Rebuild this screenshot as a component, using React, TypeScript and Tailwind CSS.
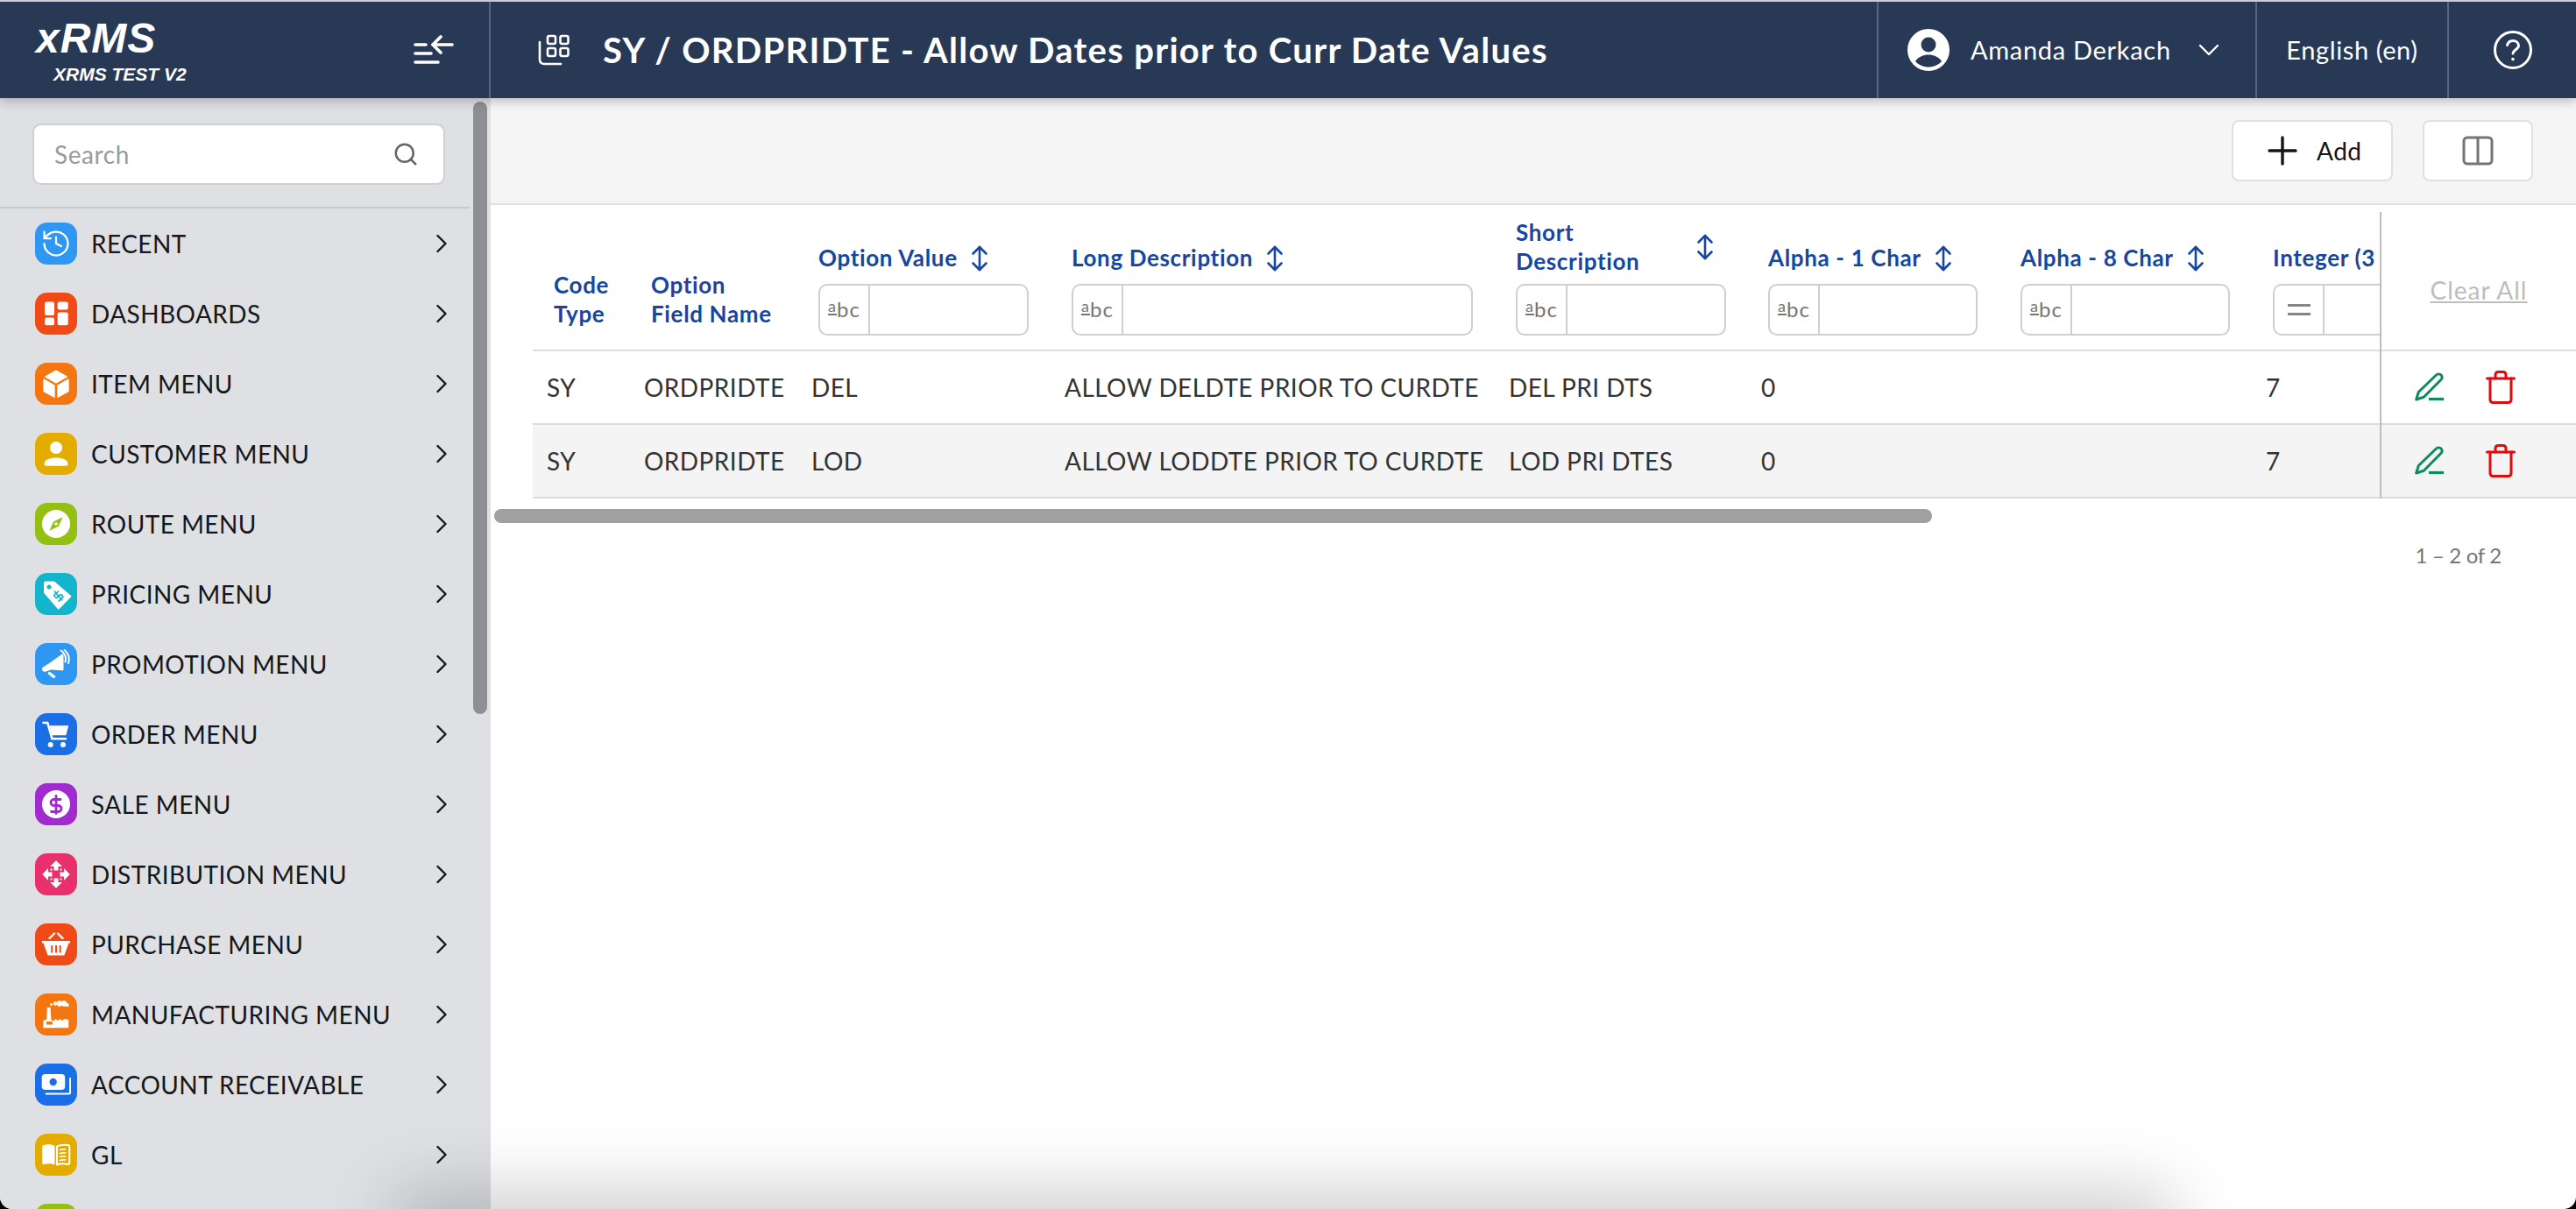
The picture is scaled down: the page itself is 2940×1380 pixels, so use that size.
import React from 'react';
import { ChevronRight, History, Search } from 'lucide-react';

const COLS = 'grid grid-cols-[111px_191px_289px_507px_288px_288px_288px_288px]';

const DollarMark = ({ stroke, transform }: { stroke: string; transform: string }) => (
  <g transform={transform} fill="none" stroke={stroke} strokeWidth="2.8" strokeLinecap="round" strokeLinejoin="round">
    <path d="M12 2v20" />
    <path d="M17 6H9.5a3.5 3.5 0 0 0 0 7h5a3.5 3.5 0 0 1 0 7H6.5" />
  </g>
);

const Tile = ({ bg, children }: { bg: string; children?: React.ReactNode }) => (
  <div className={`flex h-12 w-12 shrink-0 items-center justify-center rounded-[14px] ${bg}`}>{children}</div>
);

const Glyph = ({ children }: { children: React.ReactNode }) => (
  <svg width="48" height="48" viewBox="0 0 48 48">{children}</svg>
);

const MENU: { label: string; icon: React.ReactNode }[] = [
  {
    label: 'RECENT',
    icon: (
      <Tile bg="bg-[#2e97f1]">
        <History size={36} color="#fff" strokeWidth={1.5} />
      </Tile>
    ),
  },
  {
    label: 'DASHBOARDS',
    icon: (
      <Tile bg="bg-[#f04a17]">
        <Glyph>
          <g fill="#fff">
            <rect x="11" y="10.5" width="11" height="15.5" rx="2" />
            <rect x="25.7" y="10.5" width="12" height="9" rx="2" />
            <rect x="11" y="28.5" width="11" height="8.7" rx="2" />
            <rect x="25.7" y="22.5" width="12" height="14.7" rx="2" />
          </g>
        </Glyph>
      </Tile>
    ),
  },
  {
    label: 'ITEM MENU',
    icon: (
      <Tile bg="bg-[#f37610]">
        <Glyph>
          <g fill="#fff" stroke="#fff" strokeWidth="1.4" strokeLinejoin="round">
            <path d="M24 9.2 36.4 16 24 22.8 11.6 16z" />
            <path d="M10 19.2 22 26v13.2l-12-6.6z" />
            <path d="M38 19.2 26 26v13.2l12-6.6z" />
          </g>
        </Glyph>
      </Tile>
    ),
  },
  {
    label: 'CUSTOMER MENU',
    icon: (
      <Tile bg="bg-[#e5ac00]">
        <Glyph>
          <circle cx="24" cy="17" r="7" fill="#fff" />
          <path d="M10.5 35.5c0-4.5 6-7 13.5-7s13.500 2.500 13.500 7c0 1.400-.7 2.200-2 2.200H12.500c-1.300 0-2-.8-2-2.200z" fill="#fff" />
        </Glyph>
      </Tile>
    ),
  },
  {
    label: 'ROUTE MENU',
    icon: (
      <Tile bg="bg-[#94c011]">
        <Glyph>
          <circle cx="24" cy="24" r="16" fill="#fff" />
          <path d="M31.700 16.300 26.800 26.800 16.300 31.700 21.200 21.200z" fill="#94c011" />
          <circle cx="24" cy="24" r="1.700" fill="#fff" />
        </Glyph>
      </Tile>
    ),
  },
  {
    label: 'PRICING MENU',
    icon: (
      <Tile bg="bg-[#13b5cc]">
        <Glyph>
          <path d="M11.500 10h10L41 26.700 26.700 41 10.700 22.500V11z" fill="#fff" stroke="#fff" strokeWidth="1.200" strokeLinejoin="round" />
          <circle cx="16" cy="16" r="2.500" fill="#13b5cc" />
          <DollarMark stroke="#13b5cc" transform="translate(26.500 26) rotate(-40) scale(.62) translate(-12 -12)" />
        </Glyph>
      </Tile>
    ),
  },
  {
    label: 'PROMOTION MENU',
    icon: (
      <Tile bg="bg-[#2e97f1]">
        <Glyph>
          <path d="M31 12.500c1 0 1.500.6 1.500 1.500v16c0 1-.7 1.500-1.600 1.200L18 30.500l-6 2.200c-3.500 1-5.500-3.600-2.500-5.500l6-3.700z" fill="#fff" />
          <path d="M16.500 34.500l5 4" stroke="#fff" strokeWidth="3.500" strokeLinecap="round" />
          <g fill="none" stroke="#fff" strokeWidth="2" strokeLinecap="round">
            <path d="M29.500 8.500c4.500 2.500 6.500 8 5 13" />
            <path d="M33.500 8c4.500 3 6.500 9 4.500 15" />
          </g>
        </Glyph>
      </Tile>
    ),
  },
  {
    label: 'ORDER MENU',
    icon: (
      <Tile bg="bg-[#1a6fe6]">
        <Glyph>
          <path d="M16.500 14.300H38.300L35.300 25.300H19.500z" fill="#fff" />
          <path d="M9.500 11H14.300L19.500 29.300H35" fill="none" stroke="#fff" strokeWidth="2.600" strokeLinecap="round" strokeLinejoin="round" />
          <circle cx="17.700" cy="36" r="3" fill="#fff" />
          <circle cx="32" cy="36" r="3" fill="#fff" />
        </Glyph>
      </Tile>
    ),
  },
  {
    label: 'SALE MENU',
    icon: (
      <Tile bg="bg-[#a02ccf]">
        <Glyph>
          <circle cx="24" cy="24" r="16" fill="#fff" />
          <DollarMark stroke="#a02ccf" transform="translate(12 12.500)" />
        </Glyph>
      </Tile>
    ),
  },
  {
    label: 'DISTRIBUTION MENU',
    icon: (
      <Tile bg="bg-[#e8316c]">
        <Glyph>
          <g fill="#fff">
            <path d="M24 8.300 31 15h-4.500v4.500h-5V15H17z" />
            <path d="M24 39.700 31 33h-4.500v-4.500h-5V33H17z" />
            <path d="M8.300 24 15 17v4.500h4.500v5H15V31z" />
            <path d="M39.700 24 33 17v4.500h-4.500v5H33V31z" />
            <rect x="17.500" y="17.500" width="2" height="2" />
            <rect x="28.500" y="17.500" width="2" height="2" />
            <rect x="17.500" y="28.500" width="2" height="2" />
            <rect x="28.500" y="28.500" width="2" height="2" />
          </g>
        </Glyph>
      </Tile>
    ),
  },
  {
    label: 'PURCHASE MENU',
    icon: (
      <Tile bg="bg-[#f04a17]">
        <Glyph>
          <path d="M8 20h32v2.500h-1.600L34 35c-.3 1-1 1.500-2 1.500H16c-1 0-1.700-.5-2-1.500L9.600 22.500H8z" fill="#fff" />
          <g stroke="#f04a17" strokeWidth="2">
            <path d="M19.300 25v8.500" />
            <path d="M24 25v8.500" />
            <path d="M28.700 25v8.500" />
          </g>
          <g stroke="#fff" strokeWidth="2.400" strokeLinecap="round">
            <path d="M16.500 17l5.500-5.500" />
            <path d="M31.500 17 26 11.500" />
          </g>
        </Glyph>
      </Tile>
    ),
  },
  {
    label: 'MANUFACTURING MENU',
    icon: (
      <Tile bg="bg-[#f37610]">
        <Glyph>
          <path d="M13.800 16h3.800l.8 14 2.600 1.500 2.500-2.300 2.500 1.800 2.500-2 2.500 2 2.500-2 4.800 1V39.300H9.300V31l4-1.500z" fill="#fff" />
          <rect x="13" y="32" width="7" height="3.500" fill="#f37610" />
          <g fill="#fff">
            <circle cx="18.500" cy="12.500" r="1.500" />
            <circle cx="23" cy="11.500" r="2.200" />
            <circle cx="28" cy="11.500" r="3.200" />
            <circle cx="33" cy="11.500" r="3.200" />
            <circle cx="36.500" cy="13" r="2.200" />
          </g>
        </Glyph>
      </Tile>
    ),
  },
  {
    label: 'ACCOUNT RECEIVABLE',
    icon: (
      <Tile bg="bg-[#1a6fe6]">
        <Glyph>
          <rect x="7.700" y="12" width="26.500" height="18" rx="4" fill="#fff" />
          <circle cx="20.700" cy="21" r="4.200" fill="#1a6fe6" />
          <path d="M12.500 34.500H38.500c1 0 1.500-.5 1.500-1.500V17" fill="none" stroke="#fff" strokeWidth="2" strokeLinecap="round" />
        </Glyph>
      </Tile>
    ),
  },
  {
    label: 'GL',
    icon: (
      <Tile bg="bg-[#e5ac00]">
        <Glyph>
          <path d="M10 13c4-1 9-1 12.500 1v21.500C19 34 14 34 10 35c-1 .2-1.700-.4-1.700-1.400V14.500c0-.8.7-1.300 1.700-1.500z" fill="#fff" />
          <path d="M25 14.500c3.500-2 8-2 12.500-1.500 1 .1 1.800.7 1.800 1.500v19c0 1-.8 1.600-1.800 1.400-4-.8-9-.8-12.500.6z" fill="none" stroke="#fff" strokeWidth="2" strokeLinejoin="round" />
          <g stroke="#fff" strokeWidth="1.800" strokeLinecap="round">
            <path d="M28.500 18.500c2-.7 4-.8 6-.6" />
            <path d="M28.500 22.500c2-.7 4-.8 6-.6" />
            <path d="M28.500 26.500c2-.7 4-.8 6-.6" />
            <path d="M28.500 30.500c2-.7 4-.8 6-.6" />
          </g>
        </Glyph>
      </Tile>
    ),
  },
  { label: '', icon: <Tile bg="bg-[#94c011]" /> },
];

const SortIcon = () => (
  <svg width="20" height="30" viewBox="0 0 20 30" fill="none" stroke="#1746a0" strokeWidth="2.600" strokeLinecap="round" strokeLinejoin="round" className="shrink-0">
    <path d="M10 2v26" />
    <path d="M2.500 9.500 10 2l7.500 7.500" />
    <path d="M2.500 20.500 10 28l7.500-7.500" />
  </svg>
);

const FilterBox = ({ mode = 'text' }: { mode?: 'text' | 'equal' }) => (
  <div className="flex h-[59px] w-full shrink-0 rounded-[10px] border-2 border-[#cfcfcf] bg-white">
    <div className="flex w-[57px] shrink-0 items-center justify-center border-r-2 border-[#cfcfcf] text-[#757575]">
      {mode === 'text' ? (
        <span className="flex items-baseline text-[24px] leading-none tracking-[1px]">
          <span className="relative -top-[6px] border-b-2 border-[#757575] text-[18px] leading-[17px]">a</span>
          <span>bc</span>
        </span>
      ) : (
        <span className="flex w-[26px] flex-col gap-[7px]">
          <span className="h-[3px] bg-[#858585]" />
          <span className="h-[3px] bg-[#858585]" />
        </span>
      )}
    </div>
  </div>
);

const HeaderText = ({ children }: { children: React.ReactNode }) => (
  <span className="text-[26px] font-bold leading-[33px] tracking-[0.65px] text-[#1746a0]">{children}</span>
);

const FilterCell = ({ title, sort = true, mode }: { title: string; sort?: boolean; mode?: 'text' | 'equal' }) => (
  <div className="flex min-w-0 flex-col justify-end pb-4 pl-6 pr-[25px]">
    <div className="mb-[13px] flex items-center gap-[15px] whitespace-nowrap">
      <HeaderText>{title}</HeaderText>
      {sort && <SortIcon />}
    </div>
    <FilterBox mode={mode} />
  </div>
);

const ROWS = [
  { opt: 'DEL', long: 'ALLOW DELDTE PRIOR TO CURDTE', short: 'DEL PRI DTS', striped: false },
  { opt: 'LOD', long: 'ALLOW LODDTE PRIOR TO CURDTE', short: 'LOD PRI DTES', striped: true },
];

const RowActions = () => (
  <div className="flex items-center justify-center gap-[47px] pr-8">
    <svg width="34" height="34" viewBox="0 0 34 34" fill="none" stroke="#0e8a5f" strokeWidth="3" strokeLinecap="round" strokeLinejoin="round">
      <path d="M1.700 31l2.600-8.500L24.500 3c1.500-1.500 4-1.500 5.500 0s1.500 3.800 0 5.300L10.300 28.300z" />
      <path d="M16 30.500h17" strokeWidth="3.200" strokeLinecap="butt" />
    </svg>
    <svg width="34" height="38" viewBox="0 0 34 38" fill="none" stroke="#e00b0b" strokeWidth="3" strokeLinecap="round" strokeLinejoin="round">
      <path d="M1.500 9h31" />
      <path d="M5 9v24c0 2 1.400 3.500 3.500 3.500h17c2.100 0 3.500-1.500 3.500-3.500V9" />
      <path d="M11 9V5c0-2 1.400-3.500 3.500-3.500h5C21.600 1.500 23 3 23 5v4" />
    </svg>
  </div>
);

export default function App() {
  return (
    <div className="h-[1380px] overflow-hidden bg-black font-['Lato',sans-serif]">
      <div className="relative flex h-full flex-col overflow-hidden rounded-b-[14px] bg-white">
        {/* Header */}
        <header className="relative z-10 flex h-[112px] shrink-0 border-t-2 border-[#c9ccd1] bg-[#273955] text-white shadow-[0_3px_12px_rgba(0,0,0,0.25)]">
          <div className="flex w-[560px] shrink-0 items-center justify-between border-r-2 border-[#56667f] pl-[41px] pr-[40px]">
            <div className="flex flex-col pt-1 font-['Liberation_Sans',sans-serif] italic">
              <span className="text-[48px] font-bold leading-[38px] tracking-[1px]">xRMS</span>
              <span className="ml-5 mt-[13px] text-[21px] font-bold leading-[18px]">XRMS TEST V2</span>
            </div>
            <svg width="46" height="34" viewBox="0 0 46 34" fill="none" stroke="#fff" strokeWidth="3.600" strokeLinecap="round" strokeLinejoin="round">
              <path d="M2 11h12" />
              <path d="M2 21h18" />
              <path d="M2 31h26" />
              <path d="M44 11H22" />
              <path d="M31 2l-9 9 9 9" />
            </svg>
          </div>
          <div className="flex min-w-0 flex-1 items-center gap-[38px] pl-[54px]">
            <svg width="36" height="36" viewBox="0 0 36 36" fill="none" stroke="#fff" strokeWidth="2.600" strokeLinecap="round" strokeLinejoin="round" className="shrink-0">
              <rect x="11" y="2" width="9" height="9" rx="2" />
              <rect x="25.500" y="2" width="9" height="9" rx="2" />
              <rect x="11" y="16" width="9" height="9" rx="2" />
              <rect x="25.500" y="16" width="9" height="9" rx="2" />
              <path d="M2 9v20c0 3 2 5 5 5h19" />
            </svg>
            <h1 className="whitespace-nowrap text-[40px] font-bold leading-none tracking-[1.3px]">SY / ORDPRIDTE - Allow Dates prior to Curr Date Values</h1>
          </div>
          <div className="flex w-[432px] shrink-0 items-center border-l-2 border-[#56667f] pl-[33px]">
            <svg width="48" height="48" viewBox="0 0 48 48" className="shrink-0">
              <circle cx="24" cy="24" r="24" fill="#fff" />
              <circle cx="24" cy="18" r="8.500" fill="#273955" />
              <path d="M9 37c3-5 9-7.500 15-7.500S36 32 39 37c-3.500 4-9 6.500-15 6.500S12.500 41 9 37z" fill="#273955" />
            </svg>
            <span className="ml-[24px] whitespace-nowrap text-[29px] font-normal tracking-[0.7px]">Amanda Derkach</span>
            <svg width="24" height="14" viewBox="0 0 24 14" fill="none" stroke="#fff" strokeWidth="2.400" strokeLinecap="round" strokeLinejoin="round" className="ml-[31px]">
              <path d="M2 2l10 10L22 2" />
            </svg>
          </div>
          <div className="flex w-[219px] shrink-0 items-center justify-center whitespace-nowrap border-l-2 border-[#56667f] text-[29px] tracking-[0.6px]">English (en)</div>
          <div className="flex w-[147px] shrink-0 items-center justify-center border-l-2 border-[#56667f]">
            <svg width="46" height="46" viewBox="0 0 46 46" fill="none" stroke="#fff" strokeWidth="3" strokeLinecap="round" strokeLinejoin="round">
              <circle cx="23" cy="23" r="20.500" />
              <path d="M16.500 17.500c1-3.500 3.500-5 6.500-5 3.800 0 6.500 2.300 6.500 5.500 0 4.500-6.500 5-6.500 9" />
              <path d="M23 33.500v.1" strokeWidth="3.600" />
            </svg>
          </div>
        </header>

        <div className="flex min-h-0 flex-1">
          {/* Sidebar */}
          <aside className="relative flex w-[560px] shrink-0 flex-col overflow-hidden bg-[#dfe0e4]">
            <div className="w-[536px] shrink-0 border-b-2 border-[#c9cacd] pb-[25px] pl-[37px] pt-[29px]">
              <div className="flex h-[70px] w-[471px] items-center justify-between rounded-[10px] border-2 border-[#cfcfcf] bg-white pl-[23px] pr-7">
                <span className="text-[28px] tracking-[0.6px] text-[#9a9a9a]">Search</span>
                <Search size={30} color="#666" strokeWidth={2} />
              </div>
            </div>
            <nav className="flex flex-col">
              {MENU.map((item, i) => (
                <div key={i} className="flex h-20 shrink-0 items-center pl-10 pr-[38px]">
                  {item.icon}
                  <span className="ml-4 flex-1 whitespace-nowrap text-[28px] leading-none tracking-[0.45px] text-[#15171a]">{item.label}</span>
                  {item.label && <ChevronRight size={36} color="#15171a" strokeWidth={1.6} />}
                </div>
              ))}
            </nav>
            <div className="absolute right-1 top-1 h-[699px] w-4 rounded-full bg-[#8e8f94]" />
          </aside>

          {/* Main */}
          <main className="flex min-w-0 flex-1 flex-col">
            <div className="flex h-[122px] shrink-0 items-center justify-end gap-[34px] border-b-2 border-[#e0e0e0] bg-[#f5f5f5] pr-[49px]">
              <button className="flex h-[70px] w-[184px] items-center rounded-lg border-2 border-[#e0e0e0] bg-white pl-[39px]">
                <svg width="34" height="34" viewBox="0 0 34 34" stroke="#151515" strokeWidth="3.400" strokeLinecap="round">
                  <path d="M17 2v30" />
                  <path d="M2 17h30" />
                </svg>
                <span className="ml-[22px] text-[28px] tracking-[0.5px] text-[#151515]">Add</span>
              </button>
              <button className="flex h-[70px] w-[126px] items-center justify-center rounded-lg border-2 border-[#e0e0e0] bg-white">
                <svg width="36" height="34" viewBox="0 0 36 34" fill="none" stroke="#757575" strokeWidth="3">
                  <rect x="2" y="2" width="32" height="30" rx="4" />
                  <path d="M18 2v30" />
                </svg>
              </button>
            </div>

            <div className="flex pt-2">
              <div className="min-w-0 flex-1 overflow-hidden pl-12">
                <div className={`${COLS} h-[159px] border-b-2 border-[#dedede]`}>
                  <div className="flex flex-col justify-end pb-6 pl-6">
                    <HeaderText>Code</HeaderText>
                    <HeaderText>Type</HeaderText>
                  </div>
                  <div className="flex flex-col justify-end pb-6 pl-6">
                    <HeaderText>Option</HeaderText>
                    <HeaderText>Field Name</HeaderText>
                  </div>
                  <FilterCell title="Option Value" />
                  <FilterCell title="Long Description" />
                  <div className="flex min-w-0 flex-col justify-end pb-4 pl-6 pr-6">
                    <div className="mb-[9px] flex items-center justify-between pr-[14px]">
                      <div className="flex flex-col">
                        <HeaderText>Short</HeaderText>
                        <HeaderText>Description</HeaderText>
                      </div>
                      <SortIcon />
                    </div>
                    <FilterBox />
                  </div>
                  <FilterCell title="Alpha - 1 Char" />
                  <FilterCell title="Alpha - 8 Char" />
                  <FilterCell title="Integer (3" sort={false} mode="equal" />
                </div>
                {ROWS.map((row) => (
                  <div key={row.opt} className={`${COLS} h-[84px] items-center border-b-2 border-[#dcdcdc] text-[28px] tracking-[0.45px] text-[#333] ${row.striped ? 'bg-[#f4f4f4]' : 'bg-white'}`}>
                    <span className="pl-4">SY</span>
                    <span className="pl-4">ORDPRIDTE</span>
                    <span className="pl-4">{row.opt}</span>
                    <span className="pl-4">{row.long}</span>
                    <span className="pl-4">{row.short}</span>
                    <span className="pl-4">0</span>
                    <span className="pl-4" />
                    <span className="pl-4">7</span>
                  </div>
                ))}
              </div>
              <div className="w-[224px] shrink-0 border-l-2 border-[#bdbdbd]">
                <div className="flex h-[159px] items-center justify-center border-b-2 border-[#dedede] pt-5">
                  <span className="text-[28px] tracking-[1px] text-[#bdbdbd] underline">Clear All</span>
                </div>
                {ROWS.map((row) => (
                  <div key={row.opt} className={`flex h-[84px] items-center justify-center border-b-2 border-[#dcdcdc] ${row.striped ? 'bg-[#f4f4f4]' : 'bg-white'}`}>
                    <RowActions />
                  </div>
                ))}
              </div>
            </div>

            <div className="ml-1 mt-3 h-4 w-[1641px] rounded-full bg-[#a0a0a0]" />
            <div className="mt-[21px] pr-[85px] text-right text-[24px] leading-8 tracking-[-0.3px] text-[#757575]">1 – 2 of 2</div>
          </main>
        </div>

        {/* dock shadow along the bottom edge */}
        <div className="pointer-events-none absolute bottom-[-50px] left-[470px] h-[50px] w-[1990px] shadow-[0_0_80px_20px_rgba(0,0,0,0.2)]" />
      </div>
    </div>
  );
}
